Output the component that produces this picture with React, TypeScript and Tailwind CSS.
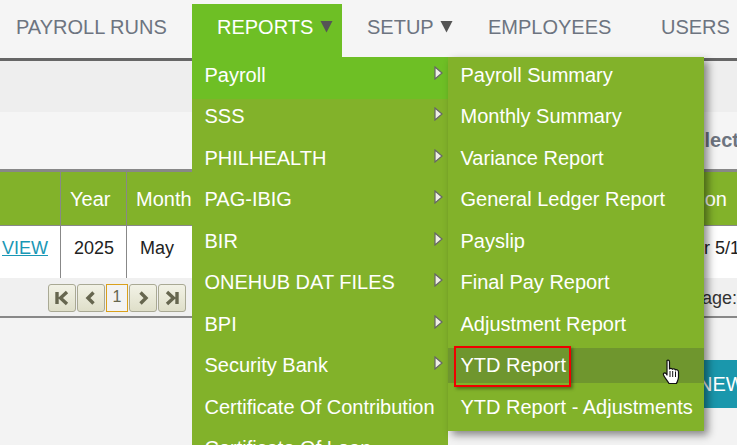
const menuOne = [
  'Payroll',
  'SSS',
  'PHILHEALTH',
  'PAG-IBIG',
  'BIR',
  'ONEHUB DAT FILES',
  'BPI',
  'Security Bank',
  'Certificate Of Contribution',
  'Certificate Of Loan',
]
const withArrow = 8

const menuTwo = [
  'Payroll Summary',
  'Monthly Summary',
  'Variance Report',
  'General Ledger Report',
  'Payslip',
  'Final Pay Report',
  'Adjustment Report',
  'YTD Report',
  'YTD Report - Adjustments',
]

function Caret() {
  return (
    <svg width="13" height="13" viewBox="0 0 13 13" className="mt-[7px] shrink-0">
      <path d="M0.5 1 H12.5 L6.5 12.5 Z" fill="#555" />
    </svg>
  )
}

function SideArrow() {
  return (
    <svg width="9" height="14" viewBox="0 0 9 14" className="absolute left-[241.5px] top-[8.5px]">
      <path d="M1 1 L8 7 L1 13 Z" fill="#efefe6" stroke="#666" strokeWidth="1.2" />
    </svg>
  )
}

function PagerButton({ children }: { children: React.ReactNode }) {
  return (
    <div className="flex h-[28px] w-[28px] items-center justify-center rounded-[3px] border border-[#a9a994] bg-gradient-to-b from-[#f2f2e6] to-[#dfdfc9]">
      {children}
    </div>
  )
}

function PagerIcon({ d }: { d: string }) {
  return (
    <svg width="16" height="16" viewBox="0 0 16 16">
      <path d={d} stroke="#66664f" strokeWidth="3.4" fill="none" />
    </svg>
  )
}

function HandCursor() {
  return (
    <svg width="20" height="26" viewBox="0 0 20 26" className="absolute left-[214px] top-[11px]">
      <path
        d="M5 1.5 C6 .8 7.5 1.2 7.5 3 V10 C8 9 10 9 10.5 10.3 C11.2 9.4 13 9.6 13.5 11 C14.5 10.3 16.5 10.8 16.5 13 V18 C16.5 21 15 23 14.5 24.5 H7 C6 22.5 2.5 18.5 1.5 16 C.8 14.3 2.8 13.2 4 14.5 L5 16 V3 Z"
        fill="#fff"
        stroke="#111"
        strokeWidth="1.2"
        strokeLinejoin="round"
      />
      <path d="M8 12 V18 M10.7 12 V18 M13.5 12.5 V18" stroke="#111" strokeWidth="1" fill="none" />
    </svg>
  )
}

export default function App() {
  return (
    <div className="relative h-[445px] w-[737px] overflow-hidden bg-[#f3f3f3] font-['Liberation_Sans',Arial,sans-serif] text-[20px] leading-[28px]">
      {/* Top nav */}
      <nav className="flex h-[58px] bg-[#f5f5f5] pt-[4px] text-[#6d7480]">
        <div className="w-[192px] pl-[16px] pt-[9px]">PAYROLL RUNS</div>
        <div className="flex h-[53px] w-[150px] items-start gap-[7px] bg-[#6ebf25] pl-[25px] pt-[9px] text-white">
          REPORTS <Caret />
        </div>
        <div className="flex w-[121px] items-start gap-[6px] pl-[25px] pt-[9px]">
          SETUP <Caret />
        </div>
        <div className="w-[173px] pl-[25px] pt-[9px]">EMPLOYEES</div>
        <div className="pl-[25px] pt-[9px]">USERS</div>
      </nav>
      <div className="h-[3px] bg-[#666]" />
      <div className="h-[51px] bg-[#eeeeee]" />

      {/* Filter row */}
      <div className="h-[57px] whitespace-nowrap bg-[#f5f5f5] pl-[680px] pt-[14px] font-bold text-[#6d7480]">
        Select Year
      </div>

      {/* Table */}
      <div className="h-[3px] bg-[#888]" />
      <div className="flex h-[54px] items-center border-b border-[#888] bg-[#82b22a] text-white">
        <div className="h-full w-[61px] shrink-0 border-r border-[#888]" />
        <div className="flex h-full w-[66px] shrink-0 items-center border-r border-[#888] pl-[9px]">Year</div>
        <div className="pl-[9px]">Month</div>
        <div className="ml-auto pr-[10px]">Option</div>
      </div>
      <div className="flex h-[52px] whitespace-nowrap bg-white text-[18px] text-[#222]">
        <div className="w-[61px] shrink-0 border-r border-[#888] pl-[2px] pt-[8px] text-[#1a97b5] underline">
          VIEW
        </div>
        <div className="w-[66px] shrink-0 border-r border-[#888] pl-[13px] pt-[8px]">2025</div>
        <div className="w-[562px] shrink-0 pl-[13px] pt-[8px]">May</div>
        <div className="pt-[8px]">for 5/1/2025</div>
      </div>
      <div className="flex h-[40px] whitespace-nowrap border-b-2 border-[#888] bg-[#f0f0f0] pt-[6px]">
        <div className="ml-[48px] flex w-[642px] shrink-0 gap-[1px]">
          <PagerButton>
            <PagerIcon d="M3 2 V14 M13 2 L6.5 8 L13 14" />
          </PagerButton>
          <PagerButton>
            <PagerIcon d="M10.5 2.5 L5 8 L10.5 13.5" />
          </PagerButton>
          <div className="flex h-[28px] w-[22px] justify-center border border-[#d9a01c] bg-[#f3f3f3] text-[16px] leading-[24px] text-[#66664f]">
            1
          </div>
          <PagerButton>
            <PagerIcon d="M5.5 2.5 L11 8 L5.5 13.5" />
          </PagerButton>
          <PagerButton>
            <PagerIcon d="M13 2 V14 M3 2 L9.5 8 L3 14" />
          </PagerButton>
        </div>
        <span className="text-[18px] text-[#333]">Page: 1 of 1</span>
      </div>

      {/* Button behind menu */}
      <div className="absolute left-[680px] top-[360px] flex h-[48px] w-[80px] items-center bg-[#1a97ac] pl-[18px] text-white">
        NEW
      </div>

      {/* Reports dropdown */}
      <div className="absolute left-[192px] top-[57px] w-[256px] bg-[#82b22a] text-white">
        {menuOne.map((item, i) => (
          <div
            key={item}
            className={`relative h-[41.5px] pl-[12.5px] pt-[3.75px] ${i === 0 ? 'bg-[#6ebf25]' : ''}`}
          >
            {item}
            {i < withArrow && <SideArrow />}
          </div>
        ))}
      </div>

      {/* Payroll submenu */}
      <div className="absolute left-[448px] top-[57px] w-[256px] bg-[#82b22a] text-white shadow-[4px_4px_8px_rgba(0,0,0,0.45)]">
        {menuTwo.map((item) => (
          <div key={item} className="relative h-[41.5px] pl-[12.5px] pt-[3.75px]">
            {item === 'YTD Report' && (
              <>
                <div className="absolute inset-x-0 top-0 h-[35px] bg-[#6f962e]" />
                <div className="absolute left-[6px] top-[-2px] h-[41px] w-[117px] border-2 border-[#f00000] shadow-[2px_2px_3px_rgba(0,0,0,0.35)]" />
                <HandCursor />
              </>
            )}
            <span className="relative">{item}</span>
          </div>
        ))}
      </div>
    </div>
  )
}
